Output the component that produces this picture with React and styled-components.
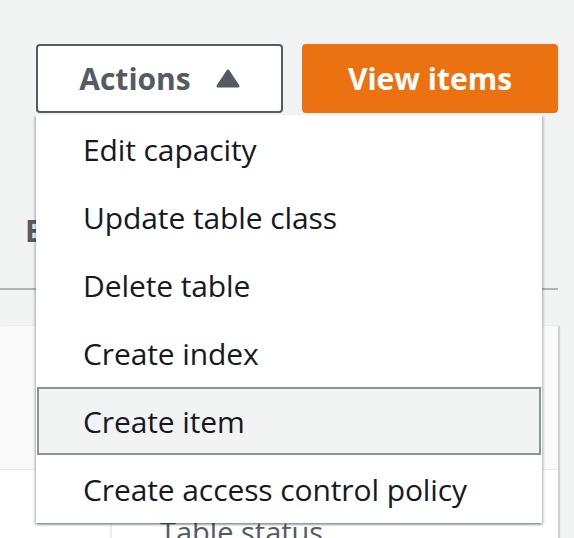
import React from "react";
import styled, { createGlobalStyle } from "styled-components";

const GlobalStyle = createGlobalStyle`
    html, body {
        margin: 0;
        padding: 0;
        background: #f2f3f3;
        font-family: "Open Sans", "Noto Sans", sans-serif;
        overflow: hidden;
    }
`

const Page = styled.div`
    width: 574px;
    height: 538px;
    overflow: hidden;
    position: relative;
`

const Toolbar = styled.div`
    display: flex;
    gap: 19px;
    padding: 44px 0 0 36px;
    position: relative;
    z-index: 2;
`

const ActionsWrap = styled.div`
    position: relative;
`

const Button = styled.button`
    box-sizing: border-box;
    height: 69px;
    border-radius: 4px;
    font-family: "Open Sans", "Noto Sans", sans-serif;
    font-size: 30px;
    font-weight: 700;
    display: flex;
    align-items: center;
    justify-content: center;
    gap: 25px;
    padding: 0;
    cursor: pointer;
    width: ${props => props.width}px;
    background: ${props => props.primary ? "#ec7211" : "#ffffff"};
    color: ${props => props.primary ? "#ffffff" : "#545b64"};
    border: 2px solid ${props => props.primary ? "#ec7211" : "#545b64"};
`

const Menu = styled.ul`
    position: absolute;
    top: 71px;
    left: 0;
    width: 506px;
    margin: 0;
    padding: 0;
    list-style: none;
    background: #ffffff;
    box-shadow: 0 2px 2px 0 rgba(0, 28, 36, 0.3), 2px 1px 2px 0 rgba(0, 28, 36, 0.15), -2px 1px 2px 0 rgba(0, 28, 36, 0.15);
`

const MenuItem = styled.li`
    box-sizing: border-box;
    height: 68px;
    display: flex;
    align-items: center;
    padding-left: ${props => props.active ? 44 : 47}px;
    font-size: 30px;
    letter-spacing: -0.1px;
    color: #16191f;
    white-space: nowrap;
    background: ${props => props.active ? "#f2f3f3" : "#ffffff"};
    border: ${props => props.active ? "2px solid #879596" : "none"};
    margin: ${props => props.active ? "0 1px" : "0"};
`

const Heading = styled.h2`
    margin: 98px 0 0 25px;
    font-size: 30px;
    font-weight: 700;
    color: #545b64;
    line-height: 40px;
    white-space: nowrap;
`

const Divider = styled.div`
    width: 558px;
    height: 2px;
    margin-top: 37px;
    background: #aab7b8;
`

const Panel = styled.div`
    width: 558px;
    margin-top: 36px;
    background: #ffffff;
    box-shadow: 2px 0 1px 0 rgba(0, 28, 36, 0.15);
`

const PanelHeader = styled.div`
    height: 143px;
    background: #fafafa;
    border-bottom: 1px solid #eaeded;
`

const PanelBody = styled.div`
    display: flex;
    height: 200px;
`

const Column = styled.div`
    width: ${props => props.width}px;
    border-right: ${props => props.divider ? "2px solid #eaeded" : "none"};
    padding: 42px 0 0 ${props => props.pad}px;
    font-size: 29px;
    color: #545b64;
    white-space: nowrap;
`

const Caret = () => (
    <svg width="24" height="19" viewBox="0 0 24 19">
        <path d="M12 2 L22 17 L2 17 Z" fill="#545b64" stroke="#545b64" strokeWidth="3" strokeLinejoin="round" />
    </svg>
)

const items = [
    "Edit capacity",
    "Update table class",
    "Delete table",
    "Create index",
    "Create item",
    "Create access control policy"
]

class App extends React.Component {
    render() {
        return (
            <Page>
                <GlobalStyle />
                <Toolbar>
                    <ActionsWrap>
                        <Button width={247}>
                            Actions
                            <Caret />
                        </Button>
                        <Menu>
                            {items.map(item => (
                                <MenuItem key={item} active={item === "Create item"}>{item}</MenuItem>
                            ))}
                        </Menu>
                    </ActionsWrap>
                    <Button primary width={256}>View items</Button>
                </Toolbar>
                <Heading>Exports and streams</Heading>
                <Divider />
                <Panel>
                    <PanelHeader />
                    <PanelBody>
                        <Column width={110} divider />
                        <Column pad={48}>Table status</Column>
                    </PanelBody>
                </Panel>
            </Page>
        )
    }
}

export default App;
